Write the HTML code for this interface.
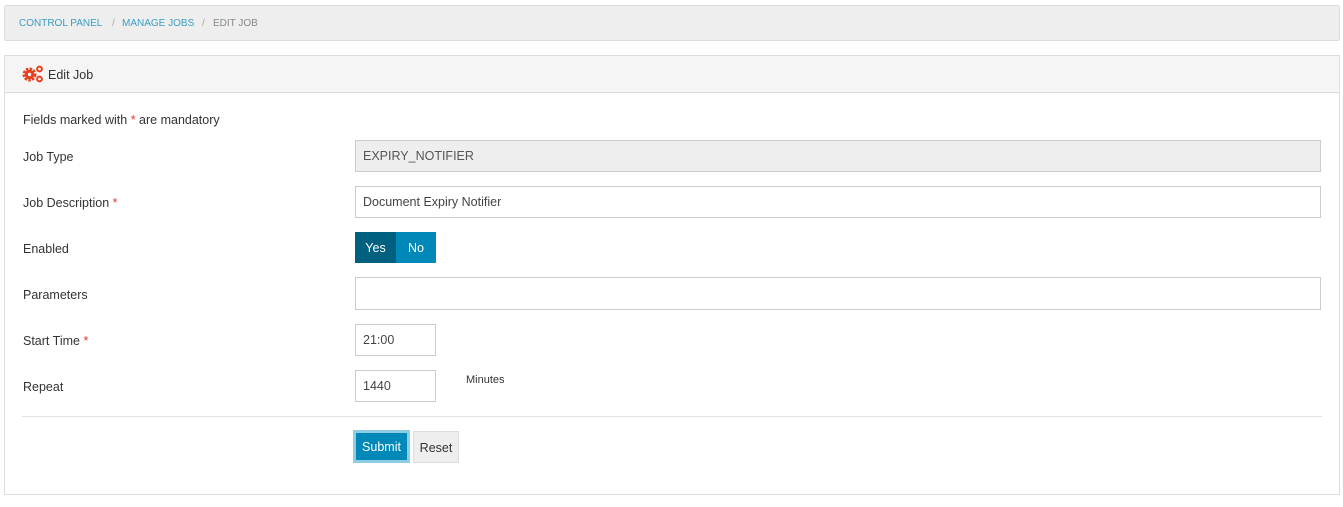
<!DOCTYPE html>
<html><head><style>
body{margin:0;width:1343px;height:507px;background:#fff;font-family:"Liberation Sans",sans-serif;color:#333;position:relative;overflow:hidden}
.a{position:absolute}
.bc{left:4px;top:5px;width:1334px;height:34px;background:#eee;border:1px solid #ddd;border-radius:2px}
.bc span{position:absolute;top:12px;font-size:10px}
.pn{left:4px;top:55px;width:1334px;height:438px;border:1px solid #ddd}
.ph{left:5px;top:56px;width:1334px;height:36px;background:#f5f5f5;border-bottom:1px solid #ddd}
.lb{font-size:12.5px;left:23px}
.in{left:355px;width:965px;height:30px;border:1px solid #ccc;font-size:12.5px;line-height:31px;padding-left:7px;box-sizing:content-box;color:#444}
.r{color:#e53935}
</style></head><body>
<div class="a bc"><span style="left:14px;color:#3a9ec4">CONTROL PANEL</span><span style="left:107px;color:#aaa">/</span><span style="left:117px;color:#3a9ec4">MANAGE JOBS</span><span style="left:197px;color:#aaa">/</span><span style="left:208px;color:#888">EDIT JOB</span></div>
<div class="a pn"></div>
<div class="a ph"></div>
<svg class="a" style="left:22px;top:65px" width="22" height="18" viewBox="0 0 22 18"><circle cx="7.5" cy="9.5" r="5.5" fill="none" stroke="#e8401c" stroke-width="3" stroke-dasharray="2.4 1.3"/><circle cx="7.5" cy="9.5" r="4.8" fill="#e8401c"/><circle cx="7.5" cy="9.5" r="1.7" fill="#f5f5f5"/><circle cx="17.5" cy="4" r="2.4" fill="none" stroke="#e8401c" stroke-width="2"/><circle cx="17.5" cy="14" r="2.4" fill="none" stroke="#e8401c" stroke-width="2"/></svg>
<div class="a" style="left:48px;top:68px;font-size:12.5px">Edit Job</div>
<div class="a lb" style="top:113px">Fields marked with <span class="r">*</span> are mandatory</div>
<div class="a lb" style="top:150px">Job Type</div>
<div class="a in" style="top:140px;width:957px;background:#eee;color:#555">EXPIRY_NOTIFIER</div>
<div class="a lb" style="top:196px">Job Description <span class="r">*</span></div>
<div class="a in" style="top:186px;width:957px">Document Expiry Notifier</div>
<div class="a lb" style="top:242px">Enabled</div>
<div class="a" style="left:355px;top:232px;width:41px;height:31px;background:#00607f;color:#fff;font-size:12.5px;line-height:32px;text-align:center">Yes</div>
<div class="a" style="left:396px;top:232px;width:40px;height:31px;background:#0088b8;color:#fff;font-size:12.5px;line-height:32px;text-align:center">No</div>
<div class="a lb" style="top:288px">Parameters</div>
<div class="a in" style="top:277px;width:957px;height:31px"></div>
<div class="a lb" style="top:334px">Start Time <span class="r">*</span></div>
<div class="a in" style="top:324px;width:72px">21:00</div>
<div class="a lb" style="top:380px">Repeat</div>
<div class="a in" style="top:370px;width:72px">1440</div>
<div class="a" style="left:466px;top:374px;font-size:11px">Minutes</div>
<div class="a" style="left:22px;top:416px;width:1300px;height:1px;background:#e3e3e3"></div>
<div class="a" style="left:353px;top:430px;width:51px;height:27px;background:#0088b8;border:3px solid #8fcde2;color:#fff;font-size:12.5px;line-height:29px;text-align:center">Submit</div>
<div class="a" style="left:413px;top:431px;width:44px;height:30px;background:#eee;border:1px solid #ddd;font-size:12.5px;line-height:32px;text-align:center">Reset</div>
</body></html>
